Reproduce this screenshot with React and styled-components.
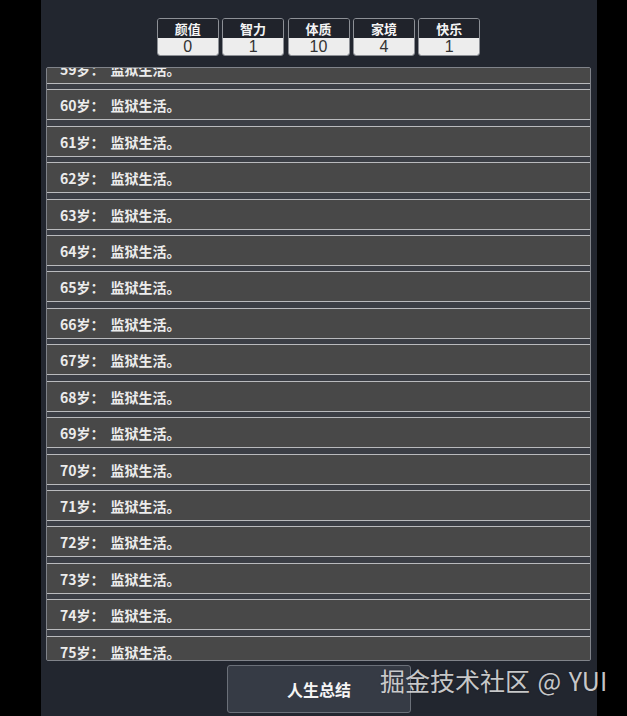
import React, { useLayoutEffect, useRef } from 'react';
import styled, { createGlobalStyle } from 'styled-components';

const GlobalStyle = createGlobalStyle`
  html, body {
    margin: 0;
    padding: 0;
    background: #000;
  }
  * {
    box-sizing: border-box;
  }
`;

const stats = [
  { label: '颜值', value: 0 },
  { label: '智力', value: 1 },
  { label: '体质', value: 10 },
  { label: '家境', value: 4 },
  { label: '快乐', value: 1 },
];

const earlyEvents = [
  '你出生了，是个男孩。',
  '你学会了走路。',
  '你开始说话了。',
  '你上了幼儿园。',
  '你在路边捡到了一块钱。',
  '你上了小学。',
  '你考试不及格。',
  '你学会了骑自行车。',
];

const lifeLog = Array.from({ length: 76 }, (_, age) => ({
  age,
  event: age < 35 ? earlyEvents[age % earlyEvents.length] : '监狱生活。',
}));

const App = () => {
  const listRef = useRef(null);
  const anchorRef = useRef(null);

  useLayoutEffect(() => {
    // keep the log scrolled so age 60 sits near the top, like the screenshot
    if (listRef.current && anchorRef.current) {
      listRef.current.scrollTop = anchorRef.current.offsetTop - 21.3;
    }
  }, []);

  return (
    <Page>
      <GlobalStyle />
      <Panel>
        <Stats>
          {stats.map((s) => (
            <StatBox key={s.label}>
              <StatLabel>{s.label}</StatLabel>
              <StatValue>{s.value}</StatValue>
            </StatBox>
          ))}
        </Stats>

        <LogList ref={listRef}>
          {lifeLog.map((item) => (
            <LogItem key={item.age} ref={item.age === 60 ? anchorRef : null}>
              <Age>{item.age}岁：</Age>
              <Event>{item.event}</Event>
            </LogItem>
          ))}
        </LogList>

        <Summary>人生总结</Summary>
      </Panel>
      <Watermark>掘金技术社区 @ YUI</Watermark>
    </Page>
  );
};

export default App;

const Page = styled.div`
  position: relative;
  width: 627px;
  height: 716px;
  padding-left: 41px;
  background: #000;
  overflow: hidden;
  font-family: "Noto Sans CJK SC", "Noto Sans", sans-serif;
`;

const Panel = styled.div`
  width: 556px;
  height: 716px;
  background: #22262f;
  display: flex;
  flex-direction: column;
  align-items: center;
  padding-top: 18px;
`;

const Stats = styled.div`
  display: flex;
  gap: 3.4px;
  margin-left: -1px;
`;

const StatBox = styled.div`
  width: 62px;
  height: 38px;
  border: 1px solid #8d9096;
  border-radius: 3px;
  overflow: hidden;
  display: flex;
  flex-direction: column;
`;

const StatLabel = styled.div`
  height: 19px;
  background: #20232b;
  color: #f4f4f4;
  font-size: 13px;
  font-weight: bold;
  line-height: 19px;
  text-align: center;
`;

const StatValue = styled.div`
  flex: 1;
  background: #ededed;
  color: #333;
  font-family: "Liberation Sans", Arial, sans-serif;
  font-size: 16px;
  line-height: 17px;
  text-align: center;
`;

const LogList = styled.div`
  position: relative;
  width: 545px;
  height: 594px;
  margin-top: 11px;
  margin-left: -1px;
  border: 1px solid #80838a;
  border-radius: 2px;
  background: #3b3e45;
  overflow: hidden;
`;

const LogItem = styled.div`
  height: 31px;
  margin-bottom: 5.43px;
  padding: 2px 0 0 13px;
  background: #484848;
  border-top: 1px solid #b9babd;
  border-bottom: 1px solid #b9babd;
  color: #ececec;
  font-size: 14px;
  font-weight: bold;
  line-height: 27px;
  white-space: nowrap;
`;

const Age = styled.span``;

const Event = styled.span`
  margin-left: 6px;
`;

const Summary = styled.button`
  width: 184px;
  height: 48px;
  margin-top: 4px;
  border: 1px solid #6b7079;
  border-radius: 3px;
  background: #363b45;
  color: #f5f5f5;
  font-family: "Noto Sans CJK SC", "Noto Sans", sans-serif;
  font-size: 16px;
  font-weight: bold;
  cursor: pointer;
`;

const Watermark = styled.div`
  position: absolute;
  left: 380px;
  top: 662px;
  color: rgba(232, 232, 232, 0.85);
  font-family: "Noto Sans CJK SC", "Noto Sans", sans-serif;
  font-size: 25px;
  word-spacing: 2px;
  white-space: nowrap;
  pointer-events: none;
  text-shadow: 0 0 2px rgba(0, 0, 0, 0.35);
`;
